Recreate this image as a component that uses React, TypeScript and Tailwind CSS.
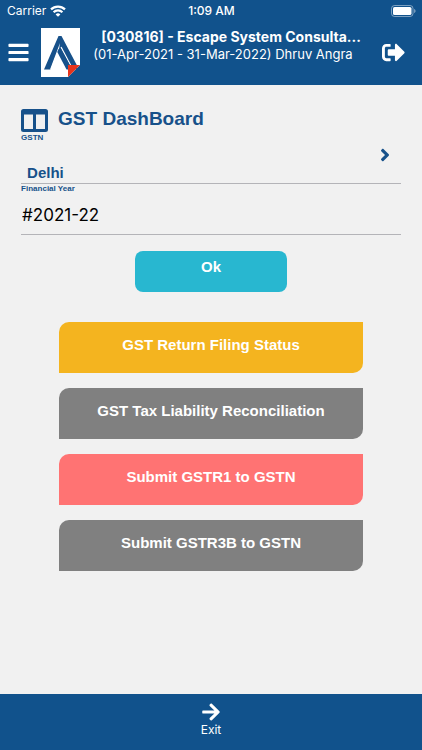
import { useState } from 'react';
import { FaAngleRight, FaArrowRight, FaBars, FaSignOutAlt } from 'react-icons/fa';

interface Action {
  title: string;
  color: string;
}

const actions: Action[] = [
  { title: 'GST Return Filing Status', color: 'bg-[#f4b41f]' },
  { title: 'GST Tax Liability Reconciliation', color: 'bg-[#808080]' },
  { title: 'Submit GSTR1 to GSTN', color: 'bg-[#ff7373]' },
  { title: 'Submit GSTR3B to GSTN', color: 'bg-[#808080]' },
];

const WifiIcon = () => (
  <svg viewBox="0 0 16 12" className="h-3 w-4" fill="none" stroke="currentColor" strokeWidth="2.2">
    <path d="M1 4.4a10 10 0 0 1 14 0" />
    <path d="M3.6 7.3a6.2 6.2 0 0 1 8.8 0" />
    <path d="M8 11.8 5.6 9.4a3.4 3.4 0 0 1 4.8 0z" fill="currentColor" stroke="none" />
  </svg>
);

const BatteryIcon = () => (
  <svg viewBox="0 0 25 12" className="h-3 w-[25px]">
    <rect x="0.5" y="0.5" width="21.5" height="11" rx="3" fill="none" stroke="#fff" strokeOpacity="0.45" />
    <rect x="2" y="2" width="18.5" height="8" rx="1.6" fill="#fff" />
    <path d="M23.2 4v4c.8-.3 1.3-1.1 1.3-2s-.5-1.7-1.3-2z" fill="#fff" fillOpacity="0.5" />
  </svg>
);

const ColumnsIcon = () => (
  <svg viewBox="0 0 27 23" className="h-[23px] w-[27px]" fill="currentColor">
    <path
      fillRule="evenodd"
      d="M2.5 0h22A2.5 2.5 0 0 1 27 2.5v18a2.5 2.5 0 0 1-2.5 2.5h-22A2.5 2.5 0 0 1 0 20.5v-18A2.5 2.5 0 0 1 2.5 0zM3 5.5V20h9V5.5zM15 5.5V20h9V5.5z"
    />
  </svg>
);

const Logo = () => (
  <svg viewBox="0 0 39 49" className="h-[49px] w-[39px] shrink-0" role="img" aria-label="Logo">
    <path d="M0 0h39v37L27 49H0z" fill="#fff" />
    <path d="M3 41.5 17.5 8h3L36 37.5V41H26L17.5 21 9.5 41.5z" fill="#17518a" />
    <path d="M19 15 9 41.5h15.8L17.2 26.5z" fill="#fff" />
    <path d="M20 19 30.5 39" stroke="#fff" strokeWidth="1.3" />
    <path d="M17.3 21.5 19.3 19.5 30 39v2.5h-4.5L16.3 24z" fill="#17518a" />
    <path d="M27 37h12L27 49z" fill="#e8341c" />
  </svg>
);

const App = () => {
  const [year, setYear] = useState('#2021-22');

  return (
    <div className="flex min-h-screen flex-col bg-[#f1f1f1] font-['Liberation_Sans',Arial,sans-serif]">
      <header className="bg-[#11528c] pb-2 font-[Inter,sans-serif] text-white">
        <div className="grid h-[22px] grid-cols-3 items-center pr-[6px] pl-[7px] text-xs">
          <div className="flex items-center gap-1">
            <span>Carrier</span>
            <WifiIcon />
          </div>
          <span className="text-center font-medium">1:09 AM</span>
          <div className="flex justify-end">
            <BatteryIcon />
          </div>
        </div>
        <div className="flex items-center pr-[6px] pl-[7px] pt-[6px]">
          <button type="button" aria-label="Menu" className="mr-[11px] shrink-0">
            <FaBars className="size-[23px]" />
          </button>
          <Logo />
          <div className="min-w-0 flex-1 self-start text-center">
            <h1 className="truncate pl-2 text-sm leading-[18px] font-bold">[030816] - Escape System Consulta...</h1>
            <p className="truncate pr-2 text-[13px] leading-4">(01-Apr-2021 - 31-Mar-2022) Dhruv Angra</p>
          </div>
          <button type="button" aria-label="Sign out" className="mr-[11px] ml-2 shrink-0">
            <FaSignOutAlt className="size-[23px]" />
          </button>
        </div>
      </header>

      <main className="flex flex-1 flex-col px-[5%] pt-[21px]">
        <div className="flex gap-[10px] text-[#17518a]">
          <div className="pt-[3px]">
            <ColumnsIcon />
            <label htmlFor="gstn" className="block pt-px text-[8px] leading-[10px] font-bold">GSTN</label>
          </div>
          <h2 className="text-[19px] leading-[26px] font-bold">GST DashBoard</h2>
        </div>
        <button
          id="gstn"
          type="button"
          className="flex h-[41px] items-start justify-between border-b border-[#b4b4b8] px-[6px] text-[#17518a]"
        >
          <span className="self-end text-[15px] leading-5 font-bold">Delhi</span>
          <FaAngleRight className="mt-[2px] size-5" />
        </button>
        <label htmlFor="year" className="text-[8px] leading-[10px] font-bold text-[#17518a]">Financial Year</label>
        <input
          id="year"
          type="text"
          value={year}
          onChange={e => setYear(e.target.value)}
          className="h-[41px] border-b border-[#b4b4b8] pt-[2px] pl-px font-[Inter,sans-serif] text-[17px] text-black outline-none"
        />
        <button
          type="button"
          className="mt-4 h-[41px] w-2/5 self-center rounded-lg bg-[#28b7d0] pb-2 text-[15px] font-bold text-white"
        >
          Ok
        </button>
        <div className="mt-[30px] flex w-4/5 flex-col gap-[15px] self-center">
          {actions.map(action => (
            <button
              key={action.title}
              type="button"
              className={`h-[51px] rounded-tl-[10px] rounded-br-[10px] pb-1 text-[15px] font-bold text-white ${action.color}`}
            >
              {action.title}
            </button>
          ))}
        </div>
      </main>

      <footer className="flex h-14 justify-center bg-[#11528c] font-[Inter,sans-serif] text-white">
        <button type="button" className="flex flex-col items-center pt-2 text-xs">
          <FaArrowRight className="size-5" />
          <span>Exit</span>
        </button>
      </footer>
    </div>
  );
};

export default App;
